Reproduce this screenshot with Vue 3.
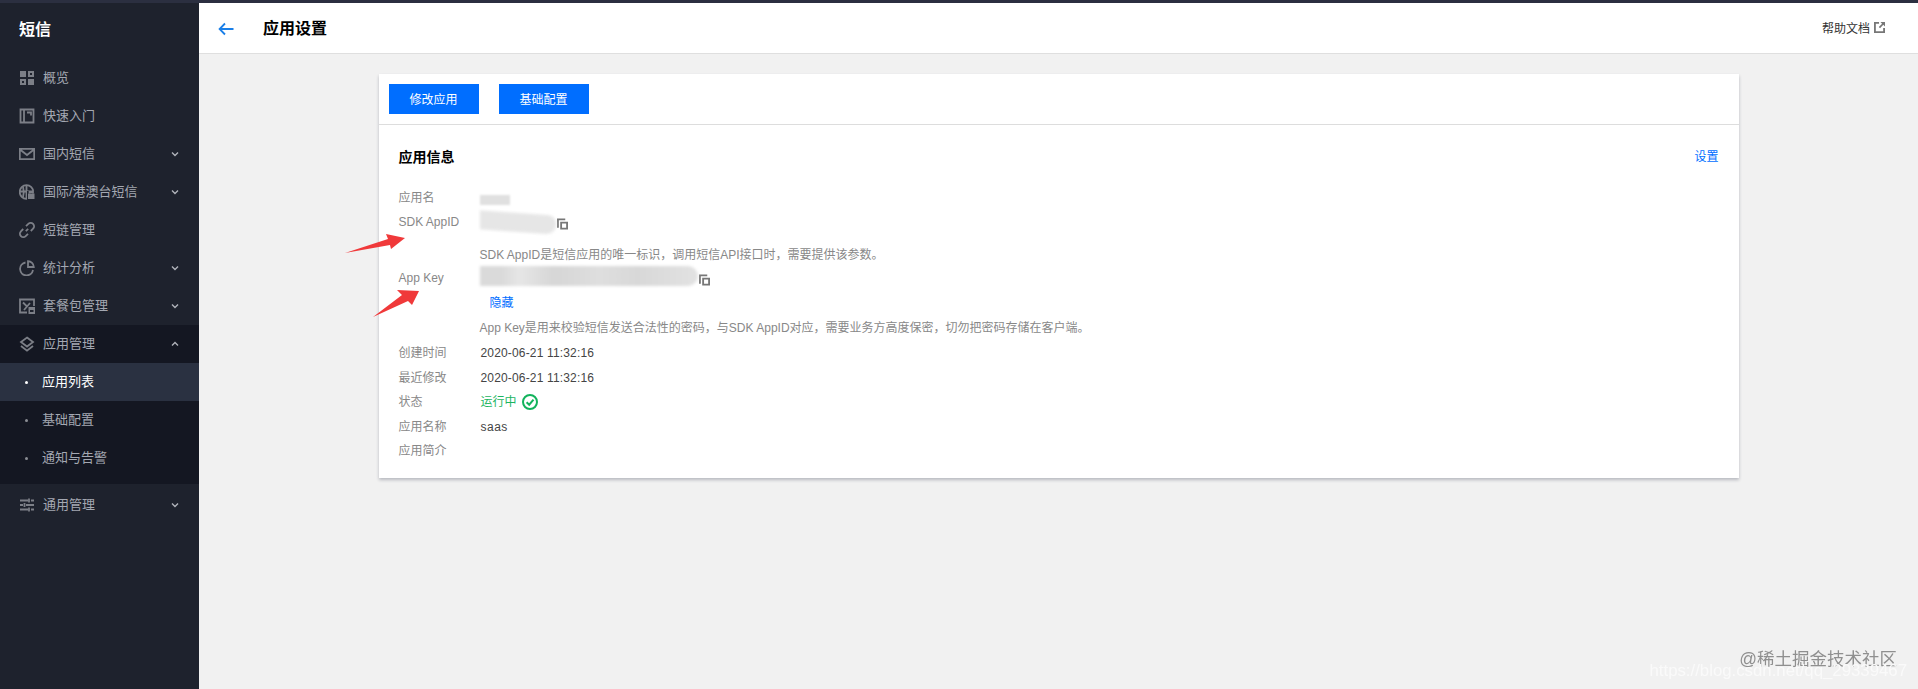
<template>
  <div class="page">
    <div class="top-strip"></div>
    <div class="layout">
      <aside class="sidebar">
        <div class="logo">短信</div>
        <template v-for="item in menu" :key="item.name">
          <div class="menu-group" :class="{ open: item.children }">
            <div class="menu-item">
              <svg class="menu-icon" viewBox="0 0 16 16" v-html="item.icon"></svg>
              <span class="menu-name">{{ item.name }}</span>
              <svg v-if="item.arrow" class="chevron" viewBox="0 0 8 6">
                <path :d="item.children ? 'M1 4.5 4 1.5 7 4.5' : 'M1 1.5 4 4.5 7 1.5'" />
              </svg>
            </div>
            <div
              v-for="sub in item.children"
              :key="sub"
              class="sub-item"
              :class="{ active: sub === '应用列表' }"
            >
              <span class="dot"></span><span class="sub-name">{{ sub }}</span>
            </div>
          </div>
        </template>
      </aside>

      <main class="main">
        <header class="topbar">
          <svg class="back" viewBox="0 0 16 14">
            <path d="M7 1.5 1.6 7 7 12.500M2 7H15.500" />
          </svg>
          <h1>应用设置</h1>
          <a class="help">
            帮助文档
            <svg viewBox="0 0 12 12" class="help-icon">
              <path d="M5.500 0H0v12h12V6.500H10v3.500H2V2h3.500z" />
              <path d="M7 0h5v5L10.100 3.100 6.600 6.800 5.200 5.400 8.800 1.800z" />
            </svg>
          </a>
        </header>

        <section class="card">
          <div class="card-actions">
            <button>修改应用</button>
            <button>基础配置</button>
          </div>
          <div class="card-body">
            <div class="card-title">
              <h2>应用信息</h2>
              <a class="link">设置</a>
            </div>

            <div class="row">
              <label>应用名</label>
              <div class="value"><span class="blur blur-name"></span></div>
            </div>
            <div class="row">
              <label>SDK AppID</label>
              <div class="value">
                <div class="secret">
                  <span class="blur blur-id"></span>
                  <svg class="copy" viewBox="0 0 12 12"><path d="M0 0h9v2H2v8H0zM3.500 3.500H12V12H3.500zM5.500 5.500v4.500H10V5.500z" fill-rule="evenodd" /></svg>
                </div>
                <p class="hint first">SDK AppID是短信应用的唯一标识，调用短信API接口时，需要提供该参数。</p>
              </div>
            </div>
            <div class="row">
              <label>App Key</label>
              <div class="value">
                <div class="secret">
                  <span class="blur blur-key"></span>
                  <svg class="copy" viewBox="0 0 12 12"><path d="M0 0h9v2H2v8H0zM3.500 3.500H12V12H3.500zM5.500 5.500v4.500H10V5.500z" fill-rule="evenodd" /></svg>
                </div>
                <a class="link hide">隐藏</a>
                <p class="hint second">App Key是用来校验短信发送合法性的密码，与SDK AppID对应，需要业务方高度保密，切勿把密码存储在客户端。</p>
              </div>
            </div>
            <div class="row meta">
              <label>创建时间</label>
              <div class="value date">2020-06-21 11:32:16</div>
            </div>
            <div class="row meta">
              <label>最近修改</label>
              <div class="value date">2020-06-21 11:32:16</div>
            </div>
            <div class="row meta">
              <label>状态</label>
              <div class="value status">
                运行中
                <svg viewBox="0 0 16 16"><circle cx="8" cy="8" r="7" /><path d="M4.600 8.200 7.200 10.700 11.500 5.700" /></svg>
              </div>
            </div>
            <div class="row meta">
              <label>应用名称</label>
              <div class="value saas">saas</div>
            </div>
            <div class="row meta">
              <label>应用简介</label>
              <div class="value"></div>
            </div>
          </div>

          <!-- annotation arrows drawn over the card -->
          <svg class="arrow arrow-id" viewBox="0 0 60 20">
            <path d="M0 19 43 5 41 0 60 4 46 15 45 11z" />
          </svg>
          <svg class="arrow arrow-key" viewBox="0 0 46 27">
            <path d="M0 27 29 5 24 0 46 1 39 15 35 11z" />
          </svg>
        </section>

        <div class="watermark">
          <div class="wm-main">@稀土掘金技术社区</div>
          <div class="wm-url">https://blog.csdn.net/qq_29339467</div>
        </div>
      </main>
    </div>
  </div>
</template>

<script setup>
const menu = [
  {
    name: '概览',
    icon: '<path class="f" d="M1 1h6v6H1zM9 1h6v6H9zM1 9h6v6H1zM9 9h6v6H9z"/><path class="h" d="M11 3h2v2h-2zM3 11h2v2H3z"/>'
  },
  {
    name: '快速入门',
    icon: '<path class="s" d="M1.500 1.500h13v13h-13zM5 1.500v13M8 4.500h4v3"/>'
  },
  {
    name: '国内短信',
    arrow: true,
    icon: '<path class="s" d="M.8 2.800h14.400v10.400H.8zM1 3.500 8 9l7-5.500"/>'
  },
  {
    name: '国际/港澳台短信',
    arrow: true,
    icon: '<circle class="s" cx="7.500" cy="8" r="6.800"/><path class="s" d="M.8 7.500h13.400M7.500 1.200v13.600M4 3c1 3 1 7 0 10"/><path class="bg" d="M8 7h8v9H8z"/><path class="f" d="M9 9.500h6.500V15H9z"/><path class="s" d="M10.500 9.500V8h3.500v1.500"/>'
  },
  {
    name: '短链管理',
    icon: '<path class="s" d="M6.800 9.200 9.200 6.800M7 4.200 9.300 1.900a2.900 2.900 0 0 1 4.800 4.800L11.800 9M9 11.800 6.700 14.100a2.900 2.900 0 0 1-4.800-4.800L4.200 7"/>'
  },
  {
    name: '统计分析',
    arrow: true,
    icon: '<path class="s" d="M6.500 2.500a6.500 6.500 0 1 0 7.500 7.500"/><path class="s" d="M9 1.200a6 6 0 0 1 5.800 5.800H9z"/>'
  },
  {
    name: '套餐包管理',
    arrow: true,
    icon: '<path class="s" d="M8 14.500H1V1.500h14V8M4 4.500l4 4 3-3.500M8 8.500 5 12"/><path class="f" d="M9.500 9H16v7H9.500z"/><path class="h" d="M11 12h3.500v2H11z"/>'
  },
  {
    name: '应用管理',
    arrow: true,
    icon: '<path class="s" d="M8 1.500 14 6 8 10.500 2 6zM2 10l6 4.700L14 10"/>',
    children: ['应用列表', '基础配置', '通知与告警']
  },
  {
    name: '通用管理',
    arrow: true,
    icon: '<path class="s" d="M1 3.500h8M12 3.500h3M10 1.500v4M1 8h3M7 8h8M5.500 6v4M1 12.500h8M12 12.500h3M10 10.500v4"/>'
  }
]
</script>

<style scoped>
.page {
  height: 689px;
  overflow: hidden;
  background: #f1f1f1;
  font-family: "Liberation Sans", "Noto Sans CJK SC", sans-serif;
  font-size: 12px;
  color: #444;
}

.top-strip {
  height: 3px;
  background: #2b2f40;
}

.layout {
  display: flex;
  height: 686px;
}

.sidebar {
  flex: 0 0 199px;
  background: #1e222d;
}

.logo {
  height: 56px;
  padding-left: 19px;
  font-size: 16px;
  font-weight: 700;
  line-height: 54px;
  color: #fff;
}

.menu-group.open {
  background: #141722;
  padding-bottom: 7px;
  margin-bottom: 2px;
}

.menu-item {
  display: flex;
  align-items: center;
  height: 38px;
  padding-left: 19px;
  font-size: 13px;
  color: #a4a8b2;
}

.menu-icon {
  width: 16px;
  height: 16px;
  margin-right: 8px;
  flex-shrink: 0;
}

.menu-icon :deep(.f) {
  fill: #7c7f87;
}

.menu-icon :deep(.h) {
  fill: #1e222d;
}

.menu-icon :deep(.bg) {
  fill: #1e222d;
}

.menu-icon :deep(.s) {
  fill: none;
  stroke: #7c7f87;
  stroke-width: 1.8;
}

.menu-name {
  flex: 1;
  padding-bottom: 3px;
}

.chevron {
  width: 8px;
  height: 6px;
  margin-right: 20px;
  fill: none;
  stroke: #b0b3ba;
  stroke-width: 1.4;
}

.sub-item {
  display: flex;
  align-items: center;
  height: 38px;
  font-size: 13px;
  color: #a4a8b2;
}

.sub-name {
  padding-bottom: 3px;
}

.sub-item.active {
  background: #2a3141;
  color: #fff;
}

.dot {
  width: 3px;
  height: 3px;
  margin: 0 14px 0 25px;
  border-radius: 50%;
  background: #8a8d94;
}

.active .dot {
  background: #fff;
}

.main {
  flex: 1;
  position: relative;
  min-width: 0;
}

.topbar {
  display: flex;
  align-items: center;
  height: 50px;
  padding: 0 33px 0 19px;
  background: #fff;
  border-bottom: 1px solid #dfdfdf;
}

.back {
  width: 16px;
  height: 14px;
  margin-right: 29px;
  margin-top: 1px;
  fill: none;
  stroke: #1a7fe8;
  stroke-width: 1.8;
}

.topbar h1 {
  flex: 1;
  margin: 0 0 3px;
  font-size: 16px;
  font-weight: 700;
  color: #000;
}

.help {
  display: flex;
  align-items: center;
  margin-bottom: 2px;
  color: #333;
}

.help-icon {
  width: 11px;
  height: 11px;
  margin-left: 4px;
  fill: #777;
}

.card {
  position: relative;
  width: 1360px;
  margin: 20px auto 0;
  background: #fff;
  box-shadow: 0 2px 3px rgba(54, 58, 80, 0.3);
}

.card-actions {
  display: flex;
  gap: 20px;
  padding: 10px;
  border-bottom: 1px solid #ddd;
}

.card-actions button {
  width: 90px;
  height: 30px;
  padding: 0 0 2px;
  border: none;
  background: #006eff;
  color: #fff;
  font: inherit;
}

.card-body {
  padding: 20px 20px 14px;
}

.card-title {
  display: flex;
  justify-content: space-between;
  align-items: center;
  height: 24px;
  margin-bottom: 17px;
}

.card-title h2 {
  margin: 0 0 3px;
  font-size: 14px;
  font-weight: 700;
  color: #000;
}

.card-title .link {
  margin-bottom: 3px;
}

.link {
  color: #006eff;
}

.row {
  display: flex;
  line-height: 24px;
}

.row.meta {
  line-height: 24.5px;
}

.row label {
  flex: 0 0 81px;
  color: #888;
}

.value {
  flex: 1;
  min-height: 24px;
  color: #444;
}

.date {
  letter-spacing: 0.16px;
  padding-left: 1px;
}

.saas {
  letter-spacing: 0.5px;
  padding-left: 1px;
}

.blur {
  display: block;
  background: #dcdcdc;
  filter: blur(1.5px);
}

.blur-name {
  width: 30px;
  height: 10px;
  margin-top: 9px;
  filter: blur(1px);
  background: #e0e0e0;
}

.secret {
  display: flex;
  align-items: flex-end;
  height: 24px;
}

.blur-id {
  width: 76px;
  height: 19px;
  margin-bottom: 2px;
  border-radius: 0 8px 10px 0;
  background: #e6e6e6;
  transform: skewY(4deg);
}

.blur-key {
  width: 218px;
  height: 20px;
  margin-bottom: 4px;
  border-radius: 0 10px 10px 0;
  background: linear-gradient(90deg, #dadada 0 10%, #e6e6e6 18%, #d6d6d6 34%, #dedede 55%, #d8d8d8 72%, #e2e2e2 100%);
}

.copy {
  width: 11px;
  height: 12px;
  margin: 0 0 4px 1px;
  fill: #777;
}

.hint {
  margin: 0;
  color: #888;
}

.hint.first {
  margin: 9px 0 -1px;
}

.hint.second {
  margin: 1px 0 1px;
}

.hide {
  display: block;
  margin-left: 10px;
  margin-top: 1px;
}

.status {
  display: flex;
  align-items: center;
  gap: 5px;
  padding-left: 1px;
  color: #1bb55f;
}

.status svg {
  width: 16px;
  height: 16px;
  fill: none;
  stroke: #12b35c;
  stroke-width: 2;
}

.arrow {
  position: absolute;
  fill: #f0393a;
}

.arrow-id {
  left: -34px;
  top: 160px;
  width: 60px;
  height: 20px;
}

.arrow-key {
  left: -6px;
  top: 216px;
  width: 46px;
  height: 27px;
}

.watermark {
  position: absolute;
  right: 11px;
  bottom: 9px;
  text-align: right;
}

.wm-main {
  padding-right: 10px;
  font-size: 17.5px;
  line-height: 24px;
  color: #8f8f8f;
  filter: blur(0.4px);
}

.wm-url {
  position: relative;
  font-size: 16.8px;
  line-height: 18px;
  margin-top: -9px;
  color: #fafafa;
  filter: blur(0.4px);
}
</style>

<style>
html,
body {
  margin: 0;
  background: #f1f1f1;
}
</style>
